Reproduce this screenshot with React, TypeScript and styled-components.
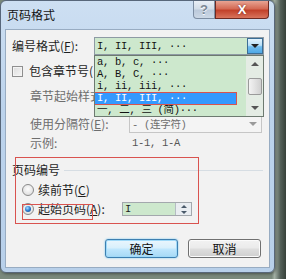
import styled, { createGlobalStyle } from 'styled-components';

const GlobalStyle = createGlobalStyle`
  html, body { margin: 0; padding: 0; }
  body {
    background: #56625a;
    font-family: "Noto Sans CJK SC", "Liberation Sans", sans-serif;
    font-size: 12px;
    color: #1e1e1e;
  }
`;

const Screen = styled.div`
  width: 286px;
  height: 279px;
  overflow: hidden;
  background: linear-gradient(90deg, #7a897c 0%, #7a897c 95%, #a3b0a4 96%, #55615a 98%, #37413a 100%);
`;

const Window = styled.div`
  box-sizing: border-box;
  width: 275px;
  height: 273px;
  display: flex;
  flex-direction: column;
  border: 1px solid #58677a;
  border-radius: 6px;
  background: linear-gradient(180deg, #cddff2 0%, #bcd3ec 40%, #b8d0ea 100%);
  box-shadow: 1px 1px 3px rgba(0, 0, 0, 0.4);
`;

const TitleBar = styled.div`
  height: 28px;
  display: flex;
  align-items: flex-start;
  padding: 0 5px 0 6px;
`;

const Title = styled.div`
  flex: 1;
  line-height: 27px;
  font-size: 12px;
  color: #141414;
`;

const CaptionButton = styled.div<{ $close?: boolean }>`
  box-sizing: border-box;
  height: 18px;
  width: ${(p) => (p.$close ? 54 : 22)}px;
  display: flex;
  align-items: center;
  justify-content: center;
  border: 1px solid ${(p) => (p.$close ? '#6d2a22' : '#7d8ea3')};
  border-top: none;
  border-radius: ${(p) => (p.$close ? '0 0 4px 0' : '0 0 0 4px')};
  background: ${(p) =>
    p.$close
      ? 'linear-gradient(180deg, #e8a493 0%, #d46a55 45%, #c2412a 55%, #d8745c 100%)'
      : 'linear-gradient(180deg, #e9eff6 0%, #d3dde8 45%, #bccadb 55%, #ccd8e6 100%)'};
  color: ${(p) => (p.$close ? '#fff' : '#7a8794')};
  font-family: "Liberation Sans", sans-serif;
  font-weight: bold;
  font-size: 13px;
  text-shadow: ${(p) => (p.$close ? '0 0 2px #6d2a22' : '0 1px 0 #fff')};
`;

const Client = styled.div`
  position: relative;
  box-sizing: border-box;
  height: 239px;
  margin: 0 4px 4px 4px;
  border: 1px solid #98acc2;
  background: #f2f2f2;
  display: flex;
  flex-direction: column;
  overflow: hidden;
`;

const Row = styled.div<{ $top: number; $h: number; $indent: number }>`
  display: flex;
  align-items: center;
  flex: none;
  height: ${(p) => p.$h}px;
  margin-top: ${(p) => p.$top}px;
  padding-left: ${(p) => p.$indent}px;
`;

const Label = styled.div<{ $w?: number; $dim?: boolean }>`
  width: ${(p) => (p.$w ? `${p.$w}px` : 'auto')};
  flex: none;
  white-space: nowrap;
  color: ${(p) => (p.$dim ? '#6e6e6e' : '#1e1e1e')};
  line-height: 14px;
`;

// part of a label that the open list covers
const Cut = styled.span<{ $w: number }>`
  display: inline-block;
  max-width: ${(p) => p.$w}px;
  overflow: hidden;
  vertical-align: top;
`;

const Combo = styled.div<{ $w: number; $h: number; $dim?: boolean }>`
  box-sizing: border-box;
  width: ${(p) => p.$w}px;
  height: ${(p) => p.$h}px;
  display: flex;
  align-items: center;
  border: 1px solid ${(p) => (p.$dim ? '#c6c6c6' : '#8e9aa4')};
  background: ${(p) => (p.$dim ? '#f4f4f4' : '#cde8cd')};
  color: ${(p) => (p.$dim ? '#6e6e6e' : '#111')};
`;

const MonoText = styled.div<{ $color?: string }>`
  flex: 1;
  padding-left: 2px;
  font-family: "Liberation Mono", "Noto Sans CJK SC", monospace;
  font-size: 10.5px;
  letter-spacing: -0.3px;
  white-space: nowrap;
  overflow: hidden;
  color: ${(p) => p.$color || 'inherit'};
`;

const ArrowButton = styled.div<{ $active?: boolean }>`
  box-sizing: border-box;
  width: 16px;
  height: 100%;
  display: flex;
  align-items: center;
  justify-content: center;
  border: 1px solid ${(p) => (p.$active ? '#3c6e95' : 'transparent')};
  background: ${(p) =>
    p.$active ? 'linear-gradient(180deg, #e4f3fc 0%, #b9e0f8 45%, #72bdee 55%, #4ea8e6 100%)' : 'transparent'};
`;

const Triangle = styled.div<{ $up?: boolean; $color?: string }>`
  width: 0;
  height: 0;
  border-left: 4px solid transparent;
  border-right: 4px solid transparent;
  ${(p) =>
    p.$up
      ? `border-bottom: 4px solid ${p.$color || '#222'};`
      : `border-top: 4px solid ${p.$color || '#222'};`}
`;

const Checkbox = styled.div`
  box-sizing: border-box;
  width: 11px;
  height: 11px;
  border: 1px solid #8f8f8f;
  background: linear-gradient(135deg, #dcdcdc 0%, #f6f6f6 100%);
  box-shadow: inset 0 0 0 1px #f4f4f4;
  margin-right: 6px;
`;

const Radio = styled.div<{ $checked?: boolean }>`
  box-sizing: border-box;
  width: 12px;
  height: 12px;
  border-radius: 50%;
  border: 1px solid #8a8a8a;
  background: radial-gradient(circle at 50% 40%, #fdfdfd 0%, #e2e2e2 70%, #cfcfcf 100%);
  margin-right: 4px;
  display: flex;
  align-items: center;
  justify-content: center;

  &::after {
    content: '';
    display: ${(p) => (p.$checked ? 'block' : 'none')};
    width: 6px;
    height: 6px;
    border-radius: 50%;
    background: radial-gradient(circle at 40% 35%, #a8dcff 0%, #2a7bd0 50%, #0e3f7e 100%);
  }
`;

const GroupLine = styled.div`
  flex: 1;
  height: 1px;
  margin: 1px 6px 0 4px;
  background: #d6dde3;
`;

const Spin = styled.div`
  box-sizing: border-box;
  width: 70px;
  height: 14px;
  display: flex;
  align-items: center;
  border: 1px solid #a3a8ad;
  background: #cde8cd;
`;

const SpinButtons = styled.div`
  width: 15px;
  height: 100%;
  display: flex;
  flex-direction: column;
  border-left: 1px solid #b5bcc3;
  background: #e9edf1;
`;

const SpinHalf = styled.div`
  flex: 1;
  display: flex;
  align-items: center;
  justify-content: center;
`;

const SmallTriangle = styled.div<{ $up?: boolean }>`
  width: 0;
  height: 0;
  border-left: 3px solid transparent;
  border-right: 3px solid transparent;
  ${(p) => (p.$up ? 'border-bottom: 3px solid #4a5a6a;' : 'border-top: 3px solid #4a5a6a;')}
`;

const ButtonRow = styled.div`
  display: flex;
  justify-content: flex-end;
  gap: 10px;
  margin-top: 22px;
  padding-right: 8px;
  flex: none;
`;

const Button = styled.div<{ $default?: boolean }>`
  box-sizing: border-box;
  width: 73px;
  height: 19px;
  display: flex;
  align-items: center;
  justify-content: center;
  border-radius: 3px;
  border: 1px solid ${(p) => (p.$default ? '#3c7fb1' : '#707070')};
  background: ${(p) =>
    p.$default
      ? 'linear-gradient(180deg, #eaf6fd 0%, #d9f0fc 45%, #bee6fd 55%, #a7d9f5 100%)'
      : 'linear-gradient(180deg, #f2f2f2 0%, #ebebeb 45%, #dddddd 55%, #cfcfcf 100%)'};
  box-shadow: ${(p) => (p.$default ? 'inset 0 0 0 1px #9fd9f8, 0 0 2px #6cc4f0' : 'inset 0 0 0 1px #fbfbfb')};
  color: #111;
`;

const ListPopup = styled.div`
  position: absolute;
  left: 88px;
  top: 25px;
  box-sizing: border-box;
  width: 170px;
  height: 62px;
  display: flex;
  border: 1px solid #6d7a70;
  background: #cde8cd;
`;

const ListItems = styled.div`
  flex: 1;
  position: relative;
  overflow: hidden;
`;

const ListItem = styled.div<{ $selected?: boolean }>`
  height: 12px;
  width: 141px;
  display: flex;
  align-items: center;
  padding-left: 2px;
  box-sizing: border-box;
  overflow: hidden;
  background: ${(p) => (p.$selected ? '#3399ff' : 'transparent')};
  color: ${(p) => (p.$selected ? '#fff' : '#111')};
  font-family: "Liberation Mono", "Noto Sans CJK SC", monospace;
  font-size: 10.5px;
  letter-spacing: -0.3px;
  white-space: nowrap;
  line-height: 12px;
`;

const ScrollBar = styled.div`
  width: 17px;
  display: flex;
  flex-direction: column;
  align-items: center;
  background: #e4ece4;
`;

const ScrollArrow = styled.div`
  height: 17px;
  display: flex;
  align-items: center;
  justify-content: center;
`;

const Thumb = styled.div`
  box-sizing: border-box;
  width: 14px;
  height: 17px;
  margin-top: 6px;
  margin-bottom: 5px;
  border: 1px solid #9a9a9a;
  border-radius: 2px;
  background: linear-gradient(90deg, #f3f3f3 0%, #e2e2e2 50%, #d0d0d0 100%);
`;

const Mark = styled.div<{ $x: number; $y: number; $w: number; $h: number }>`
  position: absolute;
  left: ${(p) => p.$x}px;
  top: ${(p) => p.$y}px;
  width: ${(p) => p.$w}px;
  height: ${(p) => p.$h}px;
  box-sizing: border-box;
  border: 1px solid #d9534f;
  pointer-events: none;
`;

const U = styled.span`
  text-decoration: underline;
`;

const listItems = ['a, b, c, ···', 'A, B, C, ···', 'i, ii, iii, ···', 'I, II, III, ···', '一, 二, 三 (简)···'];

const App = () => {
  return (
    <Screen>
      <GlobalStyle />
      <Window>
        <TitleBar>
          <Title>页码格式</Title>
          <CaptionButton>?</CaptionButton>
          <CaptionButton $close>X</CaptionButton>
        </TitleBar>
        <Client>
          <Row $top={7} $h={18} $indent={6}>
            <Label $w={82}>
              编号格式(<U>F</U>):
            </Label>
            <Combo $w={170} $h={18}>
              <MonoText>I, II, III, ···</MonoText>
              <ArrowButton $active>
                <Triangle />
              </ArrowButton>
            </Combo>
          </Row>
          <Row $top={9} $h={14} $indent={6}>
            <Checkbox />
            <Label>
              <Cut $w={64}>包含章节号(N)</Cut>
            </Label>
          </Row>
          <Row $top={9} $h={18} $indent={24}>
            <Label $w={99} $dim>
              <Cut $w={64}>章节起始样式(P):</Cut>
            </Label>
          </Row>
          <Row $top={9} $h={19} $indent={24}>
            <Label $w={99} $dim>
              使用分隔符(<U>E</U>):
            </Label>
            <Combo $w={133} $h={19} $dim>
              <MonoText>- (连字符)</MonoText>
              <ArrowButton>
                <Triangle $color="#9a9a9a" />
              </ArrowButton>
            </Combo>
          </Row>
          <Row $top={3} $h={14} $indent={24}>
            <Label $w={100} $dim>
              示例:
            </Label>
            <MonoText $color="#555">1-1, 1-A</MonoText>
          </Row>
          <Row $top={13} $h={14} $indent={6}>
            <Label>页码编号</Label>
            <GroupLine />
          </Row>
          <Row $top={6} $h={14} $indent={16}>
            <Radio />
            <Label>
              续前节(<U>C</U>)
            </Label>
          </Row>
          <Row $top={4} $h={16} $indent={16}>
            <Radio $checked />
            <Label $w={84}>
              起始页码(<U>A</U>):
            </Label>
            <Spin>
              <MonoText>I</MonoText>
              <SpinButtons>
                <SpinHalf>
                  <SmallTriangle $up />
                </SpinHalf>
                <SpinHalf>
                  <SmallTriangle />
                </SpinHalf>
              </SpinButtons>
            </Spin>
          </Row>
          <ButtonRow>
            <Button $default>确定</Button>
            <Button>取消</Button>
          </ButtonRow>

          <ListPopup>
            <ListItems>
              {listItems.map((item, i) => (
                <ListItem key={item} $selected={i === 3}>
                  {item}
                </ListItem>
              ))}
              <Mark $x={-1} $y={36} $w={143} $h={13} />
            </ListItems>
            <ScrollBar>
              <ScrollArrow>
                <Triangle $up $color="#555" />
              </ScrollArrow>
              <Thumb />
              <ScrollArrow>
                <Triangle $color="#555" />
              </ScrollArrow>
            </ScrollBar>
          </ListPopup>

          <Mark $x={9} $y={127} $w={184} $h={67} />
          <Mark $x={16} $y={174} $w={71} $h={16} />
        </Client>
      </Window>
    </Screen>
  );
};

export default App;
